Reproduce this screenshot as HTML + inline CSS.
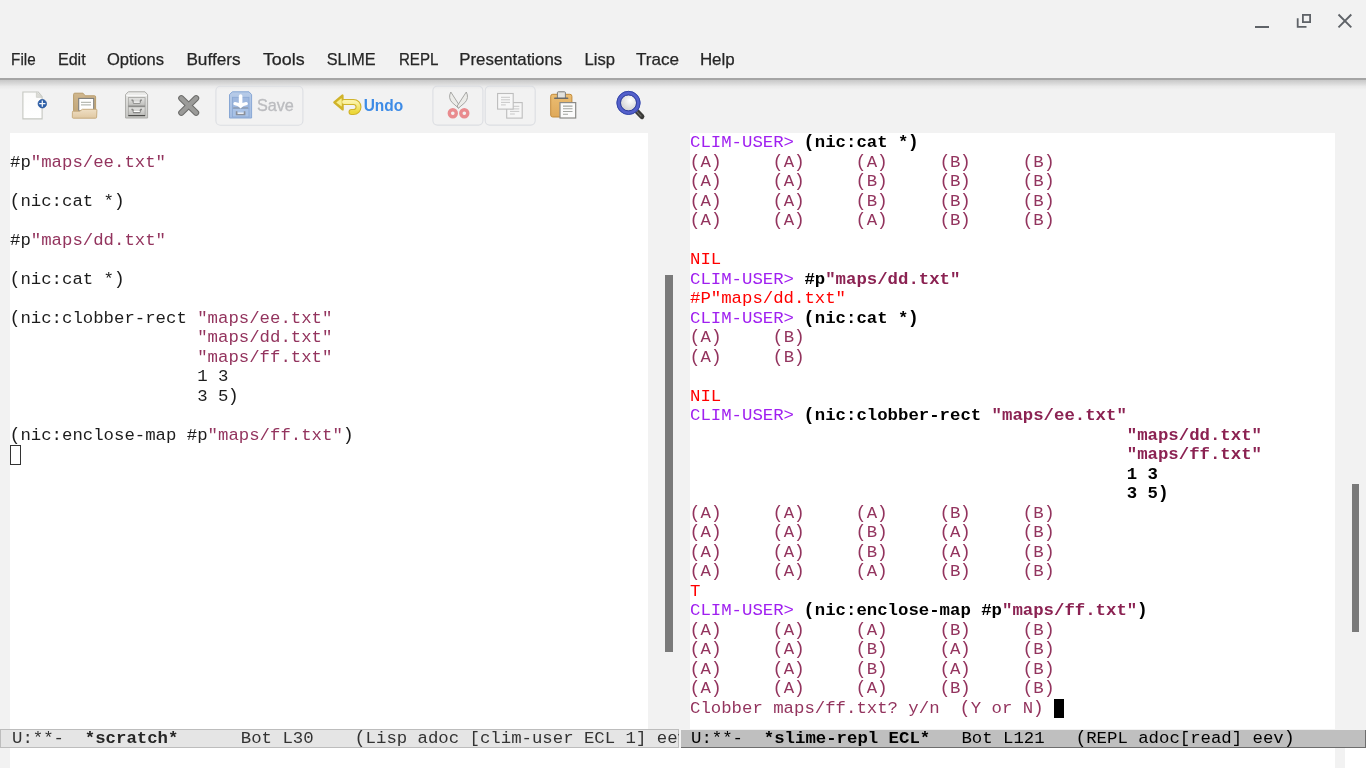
<!DOCTYPE html>
<html><head><meta charset="utf-8"><style>
*{margin:0;padding:0;box-sizing:border-box}
html,body{width:1366px;height:768px;overflow:hidden;background:#f2f2f2}
body{position:relative;font-family:"Liberation Sans",sans-serif;-webkit-font-smoothing:antialiased}
#wrap{position:absolute;left:0;top:0;width:1366px;height:768px;overflow:hidden}
.abs{position:absolute}
svg{will-change:transform}
.ln{position:absolute;white-space:pre;will-change:transform;font-family:"Liberation Mono",monospace;font-size:17.33px;line-height:19.5px;height:19.5px;color:#1c1c1c}
.pl,.pr{display:inline-block;font-style:normal;transform:scale(1.06,1.1)}
.pl{transform-origin:70% 50%}
.pr{transform-origin:30% 50%}
.k{color:#1c1c1c}
.s{color:#93345e}
.o{color:#93345e}
.p{color:#a020f0}
.r{color:#ff0000}
.b{color:#000;font-weight:bold}
.bs{color:#8b2252;font-weight:bold}
.win{position:absolute;background:#fff}
.ml{position:absolute;will-change:transform;white-space:pre;font-family:"Liberation Mono",monospace;font-size:17.33px;line-height:18px;overflow:hidden}
</style></head><body>
<div id="wrap">
<svg class="abs" style="left:0;top:0" width="1366" height="40">
<rect x="1255" y="26" width="14" height="2" fill="#5f6368"/>
<rect x="1302.9" y="14.9" width="7.2" height="7.2" fill="none" stroke="#5f6368" stroke-width="1.8"/>
<path d="M1297.7 18.3 V26.9 H1306.5" fill="none" stroke="#5f6368" stroke-width="1.8"/>
<path d="M1338.5 14.5 L1351.3 27.3 M1351.3 14.5 L1338.5 27.3" stroke="#5f6368" stroke-width="1.9"/>
</svg>
<svg class="abs" style="left:0;top:40px" width="1366" height="38">
<text x="11.1" y="25.05" textLength="24.5" lengthAdjust="spacingAndGlyphs" font-family="Liberation Sans" font-size="16.4" fill="#262626" stroke="#262626" stroke-width="0.25">File</text>
<text x="57.9" y="25.05" textLength="27.8" lengthAdjust="spacingAndGlyphs" font-family="Liberation Sans" font-size="16.4" fill="#262626" stroke="#262626" stroke-width="0.25">Edit</text>
<text x="107.0" y="25.05" textLength="57.0" lengthAdjust="spacingAndGlyphs" font-family="Liberation Sans" font-size="16.4" fill="#262626" stroke="#262626" stroke-width="0.25">Options</text>
<text x="186.4" y="25.05" textLength="54.2" lengthAdjust="spacingAndGlyphs" font-family="Liberation Sans" font-size="16.4" fill="#262626" stroke="#262626" stroke-width="0.25">Buffers</text>
<text x="262.9" y="25.05" textLength="41.7" lengthAdjust="spacingAndGlyphs" font-family="Liberation Sans" font-size="16.4" fill="#262626" stroke="#262626" stroke-width="0.25">Tools</text>
<text x="326.8" y="25.05" textLength="48.7" lengthAdjust="spacingAndGlyphs" font-family="Liberation Sans" font-size="16.4" fill="#262626" stroke="#262626" stroke-width="0.25">SLIME</text>
<text x="398.9" y="25.05" textLength="39.5" lengthAdjust="spacingAndGlyphs" font-family="Liberation Sans" font-size="16.4" fill="#262626" stroke="#262626" stroke-width="0.25">REPL</text>
<text x="459.3" y="25.05" textLength="102.9" lengthAdjust="spacingAndGlyphs" font-family="Liberation Sans" font-size="16.4" fill="#262626" stroke="#262626" stroke-width="0.25">Presentations</text>
<text x="584.5" y="25.05" textLength="30.5" lengthAdjust="spacingAndGlyphs" font-family="Liberation Sans" font-size="16.4" fill="#262626" stroke="#262626" stroke-width="0.25">Lisp</text>
<text x="635.9" y="25.05" textLength="43.1" lengthAdjust="spacingAndGlyphs" font-family="Liberation Sans" font-size="16.4" fill="#262626" stroke="#262626" stroke-width="0.25">Trace</text>
<text x="699.9" y="25.05" textLength="34.8" lengthAdjust="spacingAndGlyphs" font-family="Liberation Sans" font-size="16.4" fill="#262626" stroke="#262626" stroke-width="0.25">Help</text>
</svg>
<div class="abs" style="left:0;top:78px;width:1366px;height:2px;background:#a5a5a5"></div>
<div class="abs" style="left:0;top:80px;width:1366px;height:9.5px;background:linear-gradient(#c8c8c8,#d9d9d9 35%,#eaeaea 65%,#f2f2f2)"></div>
<div class="win" style="left:10px;top:133px;width:638px;height:596px"></div>
<div class="win" style="left:689.5px;top:133px;width:645.5px;height:596px"></div>
<div class="abs" style="left:665px;top:275px;width:7.5px;height:377px;background:#7a7a7a"></div>
<div class="abs" style="left:1352px;top:484.3px;width:7.3px;height:148px;background:#7a7a7a"></div>
<div class="win" style="left:10px;top:748px;width:1325px;height:20px"></div>
<div class="win" style="left:1345px;top:748px;width:21px;height:20px"></div>
<div class="ln" style="left:10.4px;top:152.50px"><span class="k">#p</span><span class="s">"maps/ee.txt"</span></div>
<div class="ln" style="left:10.4px;top:191.50px"><span class="k"><i class="pl">(</i>nic:cat *<i class="pr">)</i></span></div>
<div class="ln" style="left:10.4px;top:230.50px"><span class="k">#p</span><span class="s">"maps/dd.txt"</span></div>
<div class="ln" style="left:10.4px;top:269.50px"><span class="k"><i class="pl">(</i>nic:cat *<i class="pr">)</i></span></div>
<div class="ln" style="left:10.4px;top:308.50px"><span class="k"><i class="pl">(</i>nic:clobber-rect </span><span class="s">"maps/ee.txt"</span></div>
<div class="ln" style="left:10.4px;top:328.00px"><span class="k">                  </span><span class="s">"maps/dd.txt"</span></div>
<div class="ln" style="left:10.4px;top:347.50px"><span class="k">                  </span><span class="s">"maps/ff.txt"</span></div>
<div class="ln" style="left:10.4px;top:367.00px"><span class="k">                  1 3</span></div>
<div class="ln" style="left:10.4px;top:386.50px"><span class="k">                  3 5<i class="pr">)</i></span></div>
<div class="ln" style="left:10.4px;top:425.50px"><span class="k"><i class="pl">(</i>nic:enclose-map #p</span><span class="s">"maps/ff.txt"</span><span class="k"><i class="pr">)</i></span></div>
<div class="ln" style="left:690px;top:133.00px"><span class="p">CLIM-USER&gt;</span><span class="k"> </span><span class="b"><i class="pl">(</i>nic:cat *<i class="pr">)</i></span></div>
<div class="ln" style="left:690px;top:152.50px"><span class="o"><i class="pl">(</i>A<i class="pr">)</i>     <i class="pl">(</i>A<i class="pr">)</i>     <i class="pl">(</i>A<i class="pr">)</i>     <i class="pl">(</i>B<i class="pr">)</i>     <i class="pl">(</i>B<i class="pr">)</i></span></div>
<div class="ln" style="left:690px;top:172.00px"><span class="o"><i class="pl">(</i>A<i class="pr">)</i>     <i class="pl">(</i>A<i class="pr">)</i>     <i class="pl">(</i>B<i class="pr">)</i>     <i class="pl">(</i>B<i class="pr">)</i>     <i class="pl">(</i>B<i class="pr">)</i></span></div>
<div class="ln" style="left:690px;top:191.50px"><span class="o"><i class="pl">(</i>A<i class="pr">)</i>     <i class="pl">(</i>A<i class="pr">)</i>     <i class="pl">(</i>B<i class="pr">)</i>     <i class="pl">(</i>B<i class="pr">)</i>     <i class="pl">(</i>B<i class="pr">)</i></span></div>
<div class="ln" style="left:690px;top:211.00px"><span class="o"><i class="pl">(</i>A<i class="pr">)</i>     <i class="pl">(</i>A<i class="pr">)</i>     <i class="pl">(</i>A<i class="pr">)</i>     <i class="pl">(</i>B<i class="pr">)</i>     <i class="pl">(</i>B<i class="pr">)</i></span></div>
<div class="ln" style="left:690px;top:250.00px"><span class="r">NIL</span></div>
<div class="ln" style="left:690px;top:269.50px"><span class="p">CLIM-USER&gt;</span><span class="k"> </span><span class="b">#p</span><span class="bs">"maps/dd.txt"</span></div>
<div class="ln" style="left:690px;top:289.00px"><span class="r">#P"maps/dd.txt"</span></div>
<div class="ln" style="left:690px;top:308.50px"><span class="p">CLIM-USER&gt;</span><span class="k"> </span><span class="b"><i class="pl">(</i>nic:cat *<i class="pr">)</i></span></div>
<div class="ln" style="left:690px;top:328.00px"><span class="o"><i class="pl">(</i>A<i class="pr">)</i>     <i class="pl">(</i>B<i class="pr">)</i></span></div>
<div class="ln" style="left:690px;top:347.50px"><span class="o"><i class="pl">(</i>A<i class="pr">)</i>     <i class="pl">(</i>B<i class="pr">)</i></span></div>
<div class="ln" style="left:690px;top:386.50px"><span class="r">NIL</span></div>
<div class="ln" style="left:690px;top:406.00px"><span class="p">CLIM-USER&gt;</span><span class="k"> </span><span class="b"><i class="pl">(</i>nic:clobber-rect </span><span class="bs">"maps/ee.txt"</span></div>
<div class="ln" style="left:690px;top:425.50px"><span class="k">                                          </span><span class="bs">"maps/dd.txt"</span></div>
<div class="ln" style="left:690px;top:445.00px"><span class="k">                                          </span><span class="bs">"maps/ff.txt"</span></div>
<div class="ln" style="left:690px;top:464.50px"><span class="k">                                          </span><span class="b">1 3</span></div>
<div class="ln" style="left:690px;top:484.00px"><span class="k">                                          </span><span class="b">3 5<i class="pr">)</i></span></div>
<div class="ln" style="left:690px;top:503.50px"><span class="o"><i class="pl">(</i>A<i class="pr">)</i>     <i class="pl">(</i>A<i class="pr">)</i>     <i class="pl">(</i>A<i class="pr">)</i>     <i class="pl">(</i>B<i class="pr">)</i>     <i class="pl">(</i>B<i class="pr">)</i></span></div>
<div class="ln" style="left:690px;top:523.00px"><span class="o"><i class="pl">(</i>A<i class="pr">)</i>     <i class="pl">(</i>A<i class="pr">)</i>     <i class="pl">(</i>B<i class="pr">)</i>     <i class="pl">(</i>A<i class="pr">)</i>     <i class="pl">(</i>B<i class="pr">)</i></span></div>
<div class="ln" style="left:690px;top:542.50px"><span class="o"><i class="pl">(</i>A<i class="pr">)</i>     <i class="pl">(</i>A<i class="pr">)</i>     <i class="pl">(</i>B<i class="pr">)</i>     <i class="pl">(</i>A<i class="pr">)</i>     <i class="pl">(</i>B<i class="pr">)</i></span></div>
<div class="ln" style="left:690px;top:562.00px"><span class="o"><i class="pl">(</i>A<i class="pr">)</i>     <i class="pl">(</i>A<i class="pr">)</i>     <i class="pl">(</i>A<i class="pr">)</i>     <i class="pl">(</i>B<i class="pr">)</i>     <i class="pl">(</i>B<i class="pr">)</i></span></div>
<div class="ln" style="left:690px;top:581.50px"><span class="r">T</span></div>
<div class="ln" style="left:690px;top:601.00px"><span class="p">CLIM-USER&gt;</span><span class="k"> </span><span class="b"><i class="pl">(</i>nic:enclose-map #p</span><span class="bs">"maps/ff.txt"</span><span class="b"><i class="pr">)</i></span></div>
<div class="ln" style="left:690px;top:620.50px"><span class="o"><i class="pl">(</i>A<i class="pr">)</i>     <i class="pl">(</i>A<i class="pr">)</i>     <i class="pl">(</i>A<i class="pr">)</i>     <i class="pl">(</i>B<i class="pr">)</i>     <i class="pl">(</i>B<i class="pr">)</i></span></div>
<div class="ln" style="left:690px;top:640.00px"><span class="o"><i class="pl">(</i>A<i class="pr">)</i>     <i class="pl">(</i>A<i class="pr">)</i>     <i class="pl">(</i>B<i class="pr">)</i>     <i class="pl">(</i>A<i class="pr">)</i>     <i class="pl">(</i>B<i class="pr">)</i></span></div>
<div class="ln" style="left:690px;top:659.50px"><span class="o"><i class="pl">(</i>A<i class="pr">)</i>     <i class="pl">(</i>A<i class="pr">)</i>     <i class="pl">(</i>B<i class="pr">)</i>     <i class="pl">(</i>A<i class="pr">)</i>     <i class="pl">(</i>B<i class="pr">)</i></span></div>
<div class="ln" style="left:690px;top:679.00px"><span class="o"><i class="pl">(</i>A<i class="pr">)</i>     <i class="pl">(</i>A<i class="pr">)</i>     <i class="pl">(</i>A<i class="pr">)</i>     <i class="pl">(</i>B<i class="pr">)</i>     <i class="pl">(</i>B<i class="pr">)</i></span></div>
<div class="ln" style="left:690px;top:698.50px"><span class="o">Clobber maps/ff.txt? y/n  <i class="pl">(</i>Y or N<i class="pr">)</i> </span></div>
<div class="abs" style="left:10.4px;top:445px;width:10.4px;height:19.5px;border:1px solid #333"></div>
<div class="abs" style="left:1054px;top:698.5px;width:10.2px;height:19.5px;background:#000"></div>
<div class="abs" style="left:0;top:729px;width:679px;height:19px;background:#e5e5e5;border:1px solid #bdbdbd;border-right:1px solid #bdbdbd"></div>
<div class="ml" style="left:11.5px;top:730px;width:667px;height:17px;color:#333">U:**-  <b style="color:#262626">*scratch*</b>      Bot L30    <i class="pl">(</i>Lisp adoc [clim-user ECL 1] eev<i class="pr">)</i></div>
<div class="abs" style="left:680.5px;top:729.5px;width:685.5px;height:18.5px;background:#bfbfbf;border-bottom:1.2px solid #6e6e6e;border-right:1.5px solid #6e6e6e"></div>
<div class="ml" style="left:691px;top:730px;width:670px;height:17px;color:#000">U:**-  <b>*slime-repl ECL*</b>   Bot L121   <i class="pl">(</i>REPL adoc[read] eev<i class="pr">)</i></div>
<svg class="abs" style="left:0;top:0" width="700" height="132" viewBox="0 0 700 132">
<defs>
<linearGradient id="gpage" x1="0" y1="0" x2="0" y2="1"><stop offset="0" stop-color="#fbfbfa"/><stop offset="1" stop-color="#ffffff"/></linearGradient>
<linearGradient id="gfold" x1="0" y1="0" x2="0" y2="1"><stop offset="0" stop-color="#d0b78e"/><stop offset="1" stop-color="#c2a77a"/></linearGradient>
<linearGradient id="gfront" x1="0" y1="0" x2="0" y2="1"><stop offset="0" stop-color="#efdfc4"/><stop offset="1" stop-color="#e0c8a2"/></linearGradient>
<linearGradient id="gcab" x1="0" y1="0" x2="0" y2="1"><stop offset="0" stop-color="#eeeeec"/><stop offset="1" stop-color="#c8c8c5"/></linearGradient>
<linearGradient id="gdrw" x1="0" y1="0" x2="0" y2="1"><stop offset="0" stop-color="#e4e4e2"/><stop offset="1" stop-color="#bcbcb9"/></linearGradient>
<linearGradient id="gsave" x1="0" y1="0" x2="0" y2="1"><stop offset="0" stop-color="#b7cbe8"/><stop offset="1" stop-color="#a3bce2"/></linearGradient>
<linearGradient id="gclip" x1="0" y1="0" x2="0" y2="1"><stop offset="0" stop-color="#ebbd72"/><stop offset="1" stop-color="#dfa95a"/></linearGradient>
<radialGradient id="glens" cx="0.6" cy="0.35" r="0.7"><stop offset="0" stop-color="#ffffff"/><stop offset="1" stop-color="#d0d0d0"/></radialGradient>
<linearGradient id="gundo" x1="0" y1="0" x2="0" y2="1"><stop offset="0" stop-color="#fbf3a8"/><stop offset="1" stop-color="#ecd83a"/></linearGradient>
</defs>
<!-- new file -->
<path d="M22.9 92 H38.2 L42.1 96.8 V118.9 H22.9 Z" fill="url(#gpage)" stroke="#c5c7c1" stroke-width="1.1"/>
<path d="M36.4 92.2 V97.3 H42 Z" fill="#dcdcd7" stroke="#cfd0cb" stroke-width="0.9"/>
<circle cx="42.3" cy="103.7" r="4.25" fill="#2d5fa8" stroke="#23519a" stroke-width="0.7"/>
<path d="M42.3 100.6 V106.8 M39.2 103.7 H45.4" stroke="#f4f7fb" stroke-width="1.3"/>
<!-- folder -->
<path d="M73.6 94.4 Q73.6 93.2 74.8 93.2 H83 L85.2 95.8 H94.6 Q95.6 95.8 95.6 96.8 V112 H73.6 Z" fill="url(#gfold)" stroke="#b89c6c" stroke-width="1"/>
<rect x="78.7" y="98.4" width="15" height="12.5" fill="#fff" stroke="#7d7d7b" stroke-width="1.1"/>
<path d="M81 102.4 H91 M81 104.9 H91" stroke="#b8bbb4" stroke-width="1.2"/>
<path d="M72.4 112.2 Q72.2 111.2 73.2 111.2 H79.8 L82.4 109.3 H96.2 Q97 109.3 96.9 110.2 L96.6 117.2 Q96.6 118.2 95.6 118.2 H73.2 Q72.3 118.2 72.3 117.2 Z" fill="url(#gfront)" stroke="#c7ac7f" stroke-width="1"/>
<!-- cabinet -->
<path d="M125.6 94.6 L128.3 91.8 H145 L147.6 94.6 V118 H125.6 Z" fill="url(#gcab)" stroke="#a9a9a6" stroke-width="1"/>
<path d="M126.2 95.4 H147" stroke="#fafafa" stroke-width="1"/>
<rect x="128.3" y="97.6" width="16.8" height="8.6" fill="url(#gdrw)" stroke="#a2a29f" stroke-width="0.8"/>
<path d="M128.3 106.3 H145.1" stroke="#5a5a58" stroke-width="1"/>
<rect x="128.3" y="106.9" width="16.8" height="8.6" fill="url(#gdrw)" stroke="#a2a29f" stroke-width="0.8"/>
<path d="M128.3 115.6 H145.1" stroke="#4d4d4b" stroke-width="1.2"/>
<path d="M131.4 100.2 H132.8 L133.6 103.2 H139.8 L140.6 100.2 H142" fill="none" stroke="#858583" stroke-width="1.3" stroke-linejoin="round"/>
<path d="M133.6 102.2 H139.8" stroke="#ffffff" stroke-width="1.1"/>
<path d="M131.4 109.5 H132.8 L133.6 112.5 H139.8 L140.6 109.5 H142" fill="none" stroke="#858583" stroke-width="1.3" stroke-linejoin="round"/>
<path d="M133.6 111.5 H139.8" stroke="#ffffff" stroke-width="1.1"/>
<!-- close X -->
<path d="M181.3 98.2 L196.1 112.8 M196.1 98.2 L181.3 112.8" stroke="#6c6c6a" stroke-width="6.2" stroke-linecap="round"/>
<path d="M181.3 98.2 L196.1 112.8 M196.1 98.2 L181.3 112.8" stroke="#9b9b99" stroke-width="4.2" stroke-linecap="round"/>
<!-- save button -->
<rect x="215.9" y="86.2" width="87" height="39.1" rx="4.5" fill="none" stroke="#dcdee2" stroke-width="1.1"/>
<path d="M229.5 94.6 L232.3 91.8 H249 L251.6 94.6 V118 H229.5 Z" fill="url(#gsave)" stroke="#88a7d4" stroke-width="1"/>
<rect x="232.4" y="97.3" width="16.6" height="11" fill="#9fb8df" stroke="#8aa8d3" stroke-width="0.8"/>
<rect x="232.4" y="108.6" width="16.6" height="8.4" fill="#a9c2e6" stroke="#8aa8d3" stroke-width="0.8"/>
<path d="M233.2 107.9 H248" stroke="#8e99a8" stroke-width="1.2"/>
<path d="M240.6 96 V105.8" stroke="#fff" stroke-width="3.6" stroke-linecap="round"/>
<path d="M235 103.6 Q238.8 104 240.6 106 Q242.4 104 246.2 103.6" fill="none" stroke="#fff" stroke-width="3.4" stroke-linecap="round"/>
<path d="M236.6 111.2 V114.4 H244.6 V111.2" fill="none" stroke="#8a8f99" stroke-width="1.6"/>
<path d="M237.6 113.2 H243.6" stroke="#fff" stroke-width="1.2"/>
<text x="256.9" y="110.75" textLength="37" lengthAdjust="spacingAndGlyphs" font-family="Liberation Sans" font-size="17" fill="#bbbcbf" stroke="#bbbcbf" stroke-width="0.35">Save</text>
<!-- undo -->
<path d="M344 102 H353.5 A5 5 0 0 1 353.5 112 H351.5" fill="none" stroke="#d0b32a" stroke-width="6" stroke-linecap="round"/>
<path d="M334.4 102.4 L342.4 95.6 L342.6 109.4 Z" fill="#ecd640" stroke="#d0b32a" stroke-width="2.4" stroke-linejoin="round"/>
<path d="M344 102 H353.5 A5 5 0 0 1 353.5 112 H351.5" fill="none" stroke="url(#gundo)" stroke-width="3.8" stroke-linecap="round"/>
<path d="M336.4 102.4 L341.6 98.2 L341.8 106.6 Z" fill="#f7ee90"/>
<text x="363.7" y="110.7" textLength="39.5" lengthAdjust="spacingAndGlyphs" font-family="Liberation Sans" font-weight="bold" font-size="17" fill="#3d8be6">Undo</text>
<!-- cut/copy buttons -->
<rect x="432.9" y="86.1" width="50" height="39" rx="4.5" fill="none" stroke="#dcdee2" stroke-width="1.1"/>
<rect x="485.2" y="86.1" width="50" height="39" rx="4.5" fill="none" stroke="#dcdee2" stroke-width="1.1"/>
<!-- scissors -->
<path d="M450.8 92 Q447.8 98 452.2 102.6 L458.6 108.2 L459.8 106 Z" fill="#ecece9" stroke="#9e9e9c" stroke-width="0.9" stroke-linejoin="round"/>
<path d="M466.3 92 Q469.3 98 464.9 102.6 L458.4 108.2 L457.2 106 Z" fill="#ecece9" stroke="#9e9e9c" stroke-width="0.9" stroke-linejoin="round"/>
<circle cx="452.8" cy="113.3" r="3.5" fill="none" stroke="#e98b8e" stroke-width="3.4"/>
<circle cx="464.3" cy="113.3" r="3.5" fill="none" stroke="#e98b8e" stroke-width="3.4"/>
<rect x="451.8" y="112.3" width="2" height="2" fill="#f4f0f0"/>
<rect x="463.3" y="112.3" width="2" height="2" fill="#f4f0f0"/>
<!-- copy -->
<rect x="506.7" y="102.6" width="15.5" height="15.5" fill="#f6f6f6" stroke="#bdbdbd" stroke-width="1.1"/>
<path d="M510 106.3 H519.3 M510 108.9 H519.3 M510 111.4 H519.3 M510 114 H514.8" stroke="#c8c8c8" stroke-width="1"/>
<rect x="497.6" y="93.5" width="15.6" height="15.6" fill="#f7f7f7" stroke="#bdbdbd" stroke-width="1.1"/>
<path d="M501 97.3 H510 M501 99.8 H510 M501 102.4 H510 M501 104.9 H505.8" stroke="#c8c8c8" stroke-width="1"/>
<!-- paste -->
<rect x="550.7" y="94.3" width="21.2" height="22.7" rx="2" fill="url(#gclip)" stroke="#c38b3a" stroke-width="1"/>
<path d="M557.4 98 V92.6 Q557.4 91.8 558.2 91.8 H564.6 Q565.4 91.8 565.4 92.6 V98" fill="#e2e2de" stroke="#7c7c7a" stroke-width="1"/>
<path d="M554.8 98.2 H567.6" stroke="#6a6a68" stroke-width="1.6" stroke-linecap="round"/>
<rect x="560" y="102.6" width="15.7" height="15.4" fill="#fbfbfb" stroke="#8a8a88" stroke-width="1.2"/>
<path d="M563 106.1 H572.5 M563 108.8 H572.5 M563 111.5 H572.5 M563 114.3 H568" stroke="#a2a5a0" stroke-width="1.1"/>
<!-- search -->
<path d="M635.4 109.8 L641.9 116.6" stroke="#3a3a38" stroke-width="5" stroke-linecap="round"/>
<path d="M636.6 111.4 L641 116" stroke="#6a6a66" stroke-width="1.2" stroke-linecap="round"/>
<circle cx="628.5" cy="102.9" r="7.8" fill="url(#glens)"/>
<circle cx="628.5" cy="102.9" r="9.8" fill="none" stroke="#5460cc" stroke-width="4.2"/>
<circle cx="628.5" cy="102.9" r="11.6" fill="none" stroke="#3446a6" stroke-width="1"/>
<circle cx="628.5" cy="102.9" r="8" fill="none" stroke="#2a3a90" stroke-width="0.9"/>
</svg>

</div>
</body></html>
